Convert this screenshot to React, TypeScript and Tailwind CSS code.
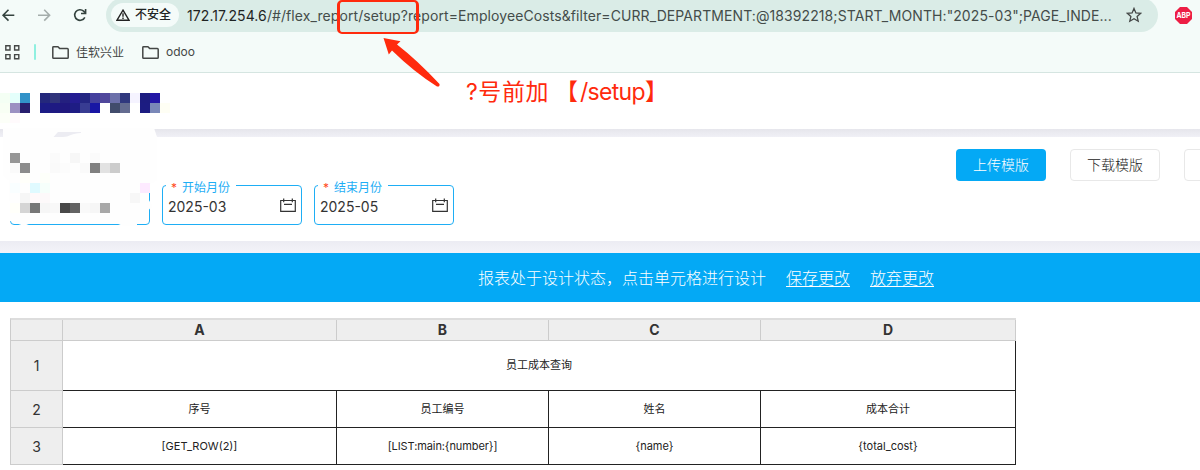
import React from "react";

const FONT = "font-['Inter','Noto_Sans_CJK_SC',sans-serif]";

type Cell = [number, number, string];

const mosaic: Cell[] = [
  [0, 93, "#f4fff4"], [10, 93, "#e4fffb"], [20, 93, "#3292c8"],
  [0, 103, "#f8fff4"], [10, 103, "#9c90c2"], [20, 103, "#281f6e"],
  [40, 93, "#24287c"], [50, 93, "#30347a"], [60, 93, "#24207f"], [70, 93, "#241c92"], [80, 93, "#242682"],
  [90, 93, "#44409e"], [100, 93, "#50489c"], [110, 93, "#6c70aa"], [120, 93, "#30387e"], [130, 93, "#f5f3ff"],
  [140, 93, "#1c1c80"], [150, 93, "#2418a6"],
  [40, 103, "#1c1c86"], [50, 103, "#1e1a82"], [60, 103, "#20187e"], [70, 103, "#1e1c84"], [80, 103, "#383c92"],
  [90, 103, "#1816a4"], [110, 103, "#414c6c"], [120, 103, "#646c90"],
  [140, 103, "#1c1c82"], [150, 103, "#7a88b8"], [160, 103, "#fefef4"],
  [0, 113, "#fcfff8"], [10, 113, "#fffafc"],
  [10, 153, "#969696"], [50, 153, "#fbfbfb"], [70, 153, "#f7f7f7"], [90, 153, "#fbfbfb"],
  [10, 163, "#fafafa"], [20, 163, "#8c8c8c"], [50, 163, "#fafafa"], [60, 163, "#fcfcfc"], [80, 163, "#fafafa"],
  [90, 163, "#808080"], [100, 163, "#e2e2e2"], [110, 163, "#cccccc"],
  [20, 173, "#fffffa"], [40, 173, "#fdfffa"],
  [10, 183, "#f9feff"], [30, 183, "#e0faff"], [40, 183, "#f6fffb"], [140, 183, "#fdeaff"],
  [20, 193, "#f6f6f6"], [30, 193, "#fff9fa"], [40, 193, "#fdf9fa"], [130, 193, "#f7f7f7"],
  [10, 203, "#fffffa"], [20, 203, "#d5d5d5"], [30, 203, "#777777"], [40, 203, "#f6f6f6"], [50, 203, "#f8f8f8"],
  [60, 203, "#484848"], [70, 203, "#636363"], [80, 203, "#f9f9f9"], [90, 203, "#f6f6f6"], [100, 203, "#a8a8a8"],
];

function Redaction() {
  return (
    <svg className="pointer-events-none absolute left-0 top-0" width="170" height="240" viewBox="0 0 170 240">
      <path
        d="M3 128H154L157 137V180L147 186L148.500 199L152 206L148 211L146 220L137 223V226H130L123 226L117 223.500H30L24 226L17 223.500L10 221L9 180L3 175Z"
        fill="#fefefe"
      />
      <path d="M53.500 137L58 132H81V133C72 133 69 137 63 137Z" fill="#ececf2" />
      <g shapeRendering="crispEdges">
        {mosaic.map(([x, y, fill]) => (
          <rect key={`${x}-${y}`} x={x} y={y} width="10" height="10" fill={fill} />
        ))}
      </g>
    </svg>
  );
}

function CalendarIcon() {
  return (
    <svg width="16" height="15" viewBox="0 0 16 15" fill="none" stroke="#333" strokeWidth="1.200">
      <path d="M0.700 2.500H15.300V13.400H0.700ZM3.700 0.500V4.200M12.300 0.500V4.200M4 6.300H12" />
    </svg>
  );
}

function DateField({ label, value }: { label: string; value: string }) {
  return (
    <div className="relative flex h-10 w-[140px] items-center justify-between rounded border border-[#1eaef5] px-[5px]">
      <div className="absolute left-[3px] top-[-8px] flex h-[20px] w-[70px] items-center bg-white text-[12px] text-[#1eaef5]">
        <span className="w-[16px] pl-[5px] text-[#ff4a20]">*</span>
        <span>{label}</span>
      </div>
      <span className="pt-[3px] text-[14px] leading-5 text-[#333]">{value}</span>
      <CalendarIcon />
    </div>
  );
}

function Folder() {
  return (
    <svg width="17" height="13" viewBox="0 0 17 13" fill="none" stroke="#444746" strokeWidth="1.500" strokeLinejoin="round">
      <path d="M0.800 1.500C0.800 1 1 0.800 1.500 0.800H6L7.800 2.600H15.300C15.900 2.600 16.200 2.900 16.200 3.400V11.400C16.200 11.900 15.900 12.200 15.400 12.200H1.600C1.100 12.200 0.800 11.900 0.800 11.400Z" />
    </svg>
  );
}

function Browser() {
  return (
    <header className="h-[73px] border-b border-[#d5e5e1] bg-[#f4fbf9]">
      <div className="flex h-8 items-start">
        <div className="flex h-[31px] w-[106px] items-center">
          <svg width="106" height="31" viewBox="0 0 106 31" fill="none" strokeWidth="1.600">
            <path d="M14.300 15.200H3.500M8.500 9.800L3.100 15.200L8.500 20.600" stroke="#34433f" />
            <path d="M38 15.200H49M44.200 9.800L49.600 15.200L44.200 20.600" stroke="#a4adab" />
            <path d="M84.800 17.300A5.300 5.300 0 1 1 83.600 11.100L85 12.600" stroke="#34433f" />
            <path d="M85.600 9V13.500H81" stroke="#34433f" />
          </svg>
        </div>
        <div className="-mt-[2px] flex h-[34px] w-[1052px] items-center rounded-full bg-[#daece7] pl-[5px]">
          <div className="flex h-6 w-[68px] items-center rounded-full bg-[#f4fbf9] pl-[5px]">
            <svg width="14" height="12" viewBox="0 0 14 12" fill="none" stroke="#222" strokeWidth="1.400">
              <path d="M7 1.200L13 11.200H1ZM7 4.300V7.700M7 8.500V9.900" />
            </svg>
            <span className="ml-[5px] whitespace-nowrap text-[12px] font-medium text-[#1f2423]">不安全</span>
          </div>
          <div className="mt-px ml-[8px] w-[925px] whitespace-nowrap text-[14px] tracking-[0.085px] text-[#444c4a]">
            <span className="text-[#1f2423]">172.17.254.6</span>
            <span>/#/flex_report/setup?report=EmployeeCosts&amp;filter=CURR_DEPARTMENT:@18392218;START_MONTH:"2025-03";PAGE_INDE...</span>
          </div>
          <svg className="ml-[14px]" width="16" height="16" viewBox="0 0 16 16" fill="none" stroke="#444746" strokeWidth="1.300">
            <path d="M8 1.400L9.900 5.900L14.700 6.300L11.100 9.500L12.200 14.200L8 11.700L3.800 14.200L4.900 9.500L1.300 6.300L6.100 5.900Z" />
          </svg>
        </div>
        <svg className="ml-[17px] mt-[7px]" width="17" height="17" viewBox="0 0 17 17">
          <path d="M5 0H12L17 5V12L12 17H5L0 12V5Z" fill="#ed1e45" />
          <text x="8.500" y="11.300" textAnchor="middle" textLength="14" lengthAdjust="spacingAndGlyphs" fontSize="7.500" fontWeight="700" fill="white">ABP</text>
        </svg>
      </div>
      <div className="flex h-10 items-center pl-[5px] text-[12px] text-[#444746]">
        <svg width="15" height="15" viewBox="0 0 15 15" fill="none" stroke="#444746" strokeWidth="1.400">
          <path d="M0.800 0.800H5V5H0.800ZM9.600 0.800H13.800V5H9.600ZM0.800 9.600H5V13.800H0.800ZM9.600 9.600H13.800V13.800H9.600Z" />
        </svg>
        <div className="ml-[14px] mr-[16px] h-4 w-[2px] rounded-full bg-[#8ff0e0]" />
        <Folder />
        <span className="ml-[7px] mt-px w-[66px]">佳软兴业</span>
        <Folder />
        <span className="ml-[7px]">odoo</span>
      </div>
    </header>
  );
}

function Annotation() {
  return (
    <>
      <div className="absolute left-[337px] top-0 h-[34px] w-[82px] rounded-[5px] border-[3px] border-t-2 border-b-2 border-[#ff2a0d]" />
      <svg className="absolute left-[380px] top-[36px]" width="64" height="54" viewBox="0 0 64 54">
        <path d="M3.500 2L20.500 5.200L17 8.500Q37 24 59.500 48Q60 51 57 50.500Q34 36 12 14.500L8.800 18.500Z" fill="#ff2a0d" />
      </svg>
      <div className="absolute left-[466px] top-[76px] flex whitespace-nowrap text-[23px] leading-8 text-[#ff2a0d]">
        <span className="w-[89px] tracking-[0.6px]">?号前加</span>
        <span>【</span>
        <span className="w-[67px] pl-[2px] tracking-[-0.7px]">/setup</span>
        <span>】</span>
      </div>
    </>
  );
}

const HEAD = "flex items-center justify-center border-b border-r border-[#ccc] bg-[#eee] text-[14px] text-[#333]";
const BODY = "flex items-center justify-center border-b border-r border-[#222] bg-white text-[11px] text-[#222]";

function Sheet() {
  return (
    <div className="ml-[10px] mt-[16px] grid w-[1006px] grid-cols-[52px_274px_212px_212px_255px] grid-rows-[21px_50px_37px_37px] border-l border-t-2 border-l-[#ccc] border-t-[#ddd]">
      <div className={HEAD} />
      {["A", "B", "C", "D"].map((c) => (
        <div key={c} className={`${HEAD} pb-px font-bold`}>{c}</div>
      ))}
      <div className={HEAD}>1</div>
      <div className={`${BODY} col-span-4`}>员工成本查询</div>
      <div className={HEAD}>2</div>
      <div className={BODY}>序号</div>
      <div className={BODY}>员工编号</div>
      <div className={BODY}>姓名</div>
      <div className={BODY}>成本合计</div>
      <div className={HEAD}>3</div>
      <div className={BODY}>[GET_ROW(2)]</div>
      <div className={`${BODY} tracking-[-0.1px]`}>[LIST:main:&#123;number&#125;]</div>
      <div className={BODY}>&#123;name&#125;</div>
      <div className={BODY}>&#123;total_cost&#125;</div>
    </div>
  );
}

export default function App() {
  return (
    <div className={`relative h-[470px] w-[1200px] overflow-hidden bg-white ${FONT}`}>
      <Browser />
      <div className="h-14" />
      <div className="h-2 bg-linear-to-b from-[#e6e6ec] to-[#f0f0f6]" />
      <section className="flex h-[104px] justify-between">
        <div className="flex gap-3 pl-[10px] pt-12">
          <div className="h-10 w-[140px] rounded border border-[#1eaef5]" />
          <DateField label="开始月份" value="2025-03" />
          <DateField label="结束月份" value="2025-05" />
        </div>
        <div className="flex w-[244px] gap-6 overflow-hidden pt-3 text-[14px] font-light">
          <button className="h-8 w-[90px] shrink-0 rounded bg-[#04a9f5] pb-[2px] text-white">上传模版</button>
          <button className="h-8 w-[90px] shrink-0 rounded border border-[#e8e8e8] pb-[2px] text-[#222]">下载模版</button>
          <button className="h-8 w-[90px] shrink-0 rounded border border-[#e8e8e8]" />
        </div>
      </section>
      <div className="h-3 bg-linear-to-b from-[#ececf3] to-[#f3f3f9]" />
      <div className="flex h-[49px] items-center bg-[#04a9f5] pl-[478px] text-[16px] font-light text-white">
        <span className="w-[308px] whitespace-nowrap">报表处于设计状态，点击单元格进行设计</span>
        <a className="w-[84px] underline underline-offset-2">保存更改</a>
        <a className="underline underline-offset-2">放弃更改</a>
      </div>
      <Sheet />
      <Redaction />
      <Annotation />
    </div>
  );
}
